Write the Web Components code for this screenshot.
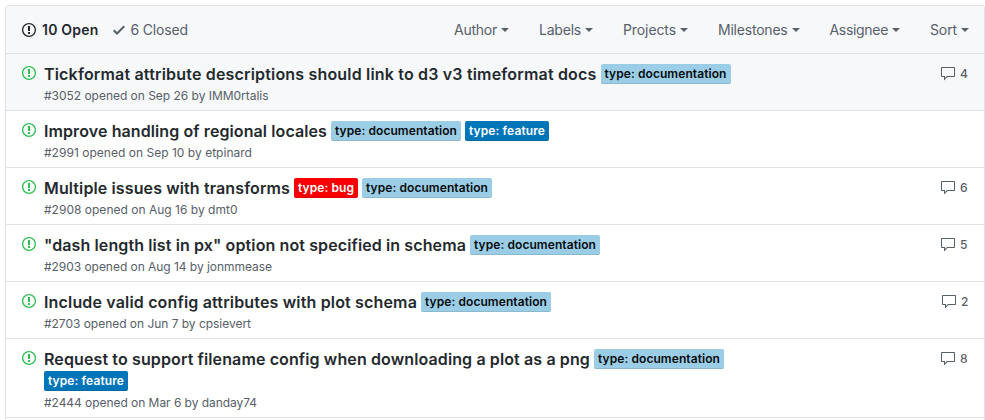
<!DOCTYPE html>
<html lang="en">
<head>
<meta charset="utf-8">
<title>Issues</title>
<style>
  body { margin: 0; padding: 5px 0 0 5px; height: 420px; box-sizing: border-box; overflow: hidden; background: #fff; color: #24292e; font: 14px/20px Inter, "Liberation Sans", sans-serif; }
</style>
</head>
<body>
<issue-list>
  <issue-toolbar slot="header"></issue-toolbar>
  <issue-row active width="552.5" number="3052" date="Sep 26" author="IMM0rtalis" meta="224.5" comments="4">Tickformat attribute descriptions should link to d3 v3 timeformat docs<issue-label slot="labels" kind="documentation"></issue-label></issue-row>
  <issue-row width="283" number="2991" date="Sep 10" author="etpinard" meta="208">Improve handling of regional locales<issue-label slot="labels" kind="documentation"></issue-label><issue-label slot="labels" kind="feature"></issue-label></issue-row>
  <issue-row width="246" number="2908" date="Aug 16" author="dmt0" meta="193.5" comments="6">Multiple issues with transforms<issue-label slot="labels" kind="bug"></issue-label><issue-label slot="labels" kind="documentation"></issue-label></issue-row>
  <issue-row width="422" number="2903" date="Aug 14" author="jonmmease" meta="228" comments="5">"dash length list in px" option not specified in schema<issue-label slot="labels" kind="documentation"></issue-label></issue-row>
  <issue-row width="373" number="2703" date="Jun 7" author="cpsievert" meta="207" comments="2">Include valid config attributes with plot schema<issue-label slot="labels" kind="documentation"></issue-label></issue-row>
  <issue-row width="546" number="2444" date="Mar 6" author="danday74" meta="213" comments="8">Request to support filename config when downloading a plot as a png<issue-label slot="labels" kind="documentation"></issue-label><issue-label slot="below" kind="feature"></issue-label></issue-row>
</issue-list>
<script>
const ICONS = {
  open: [14, 'M7 2.3c3.14 0 5.7 2.56 5.7 5.7s-2.56 5.7-5.7 5.7A5.71 5.71 0 0 1 1.3 8c0-3.14 2.56-5.7 5.7-5.7zM7 1C3.14 1 0 4.14 0 8s3.14 7 7 7 7-3.14 7-7-3.14-7-7-7zm1 3H6v5h2V4zm0 6H6v2h2v-2z'],
  check: [12, 'M12 5l-8 8-4-4 1.5-1.5L4 10l6.5-6.5L12 5z'],
  comment: [16, 'M14 1H2c-.55 0-1 .45-1 1v8c0 .55.45 1 1 1h2v3.5L7.5 11H14c.55 0 1-.45 1-1V2c0-.55-.45-1-1-1zm0 9H7l-2 2v-2H2V2h12v8z']
};
class OctIcon extends HTMLElement {
  connectedCallback() {
    const [w, d] = ICONS[this.getAttribute('name')];
    this.attachShadow({mode: 'open'}).innerHTML = `<style>:host{display:block;flex:none;width:${w}px;height:16px}svg{display:block;fill:currentColor}</style><svg width="${w}" height="16" viewBox="0 0 ${w} 16"><path fill-rule="evenodd" d="${d}"/></svg>`;
  }
}
customElements.define('oct-icon', OctIcon);

/* A single line of text tracked so that it fills the given width. */
class TextRun extends HTMLElement {
  connectedCallback() {
    const w = parseFloat(this.getAttribute('width'));
    const root = this.attachShadow({mode: 'open'});
    root.innerHTML = `<style>:host{display:block;flex:none;white-space:pre;width:${w}px}span{display:inline-block}</style><span></span>`;
    const span = root.querySelector('span');
    span.textContent = this.getAttribute('text');
    const natural = span.getBoundingClientRect().width;
    span.style.letterSpacing = (w - natural) / span.textContent.length + 'px';
  }
}
customElements.define('text-run', TextRun);

class IssueLabel extends HTMLElement {
  connectedCallback() {
    const kind = this.getAttribute('kind');
    const [bg, fg, w] = {documentation: ['#9bcee6', '#050a0c', 122], feature: ['#0075b8', '#fff', 76], bug: ['#f80000', '#fff', 56]}[kind];
    this.attachShadow({mode: 'open'}).innerHTML = `<style>:host{display:block;flex:none;box-sizing:border-box;height:20px;padding:0 4px;border-radius:2px;background:${bg};color:${fg};font-size:12px;font-weight:600;line-height:19px;box-shadow:inset 0 -1px 0 rgba(27,31,35,.12)}</style><text-run width="${w}" text="type: ${kind}"></text-run>`;
  }
}
customElements.define('issue-label', IssueLabel);

class FilterMenu extends HTMLElement {
  connectedCallback() {
    this.attachShadow({mode: 'open'}).innerHTML = `<style>:host{display:flex;align-items:center;gap:4px}i{width:0;height:0;border:4px solid transparent;border-top-color:currentColor;border-bottom:0;margin-top:1px}</style><text-run width="${this.getAttribute('width')}" text="${this.getAttribute('text')}"></text-run><i></i>`;
  }
}
customElements.define('filter-menu', FilterMenu);

class IssueToolbar extends HTMLElement {
  connectedCallback() {
    this.attachShadow({mode: 'open'}).innerHTML = `<style>
      :host{display:flex;align-items:center;height:48px;box-sizing:border-box;padding:0 15px 0 16px;background:#f6f8fa;border-bottom:1px solid #dfe2e5;color:#586069}
      .state{display:flex;align-items:center;gap:6px;margin-right:14px}
      .on{color:#24292e;font-weight:600}
      nav{display:flex;gap:30px;margin-left:auto}
    </style>
    <div class="state on"><oct-icon name="open"></oct-icon><text-run width="56.5" text="10 Open"></text-run></div>
    <div class="state"><oct-icon name="check"></oct-icon><text-run width="57.5" text="6 Closed"></text-run></div>
    <nav>${[['Author', 43], ['Labels', 42], ['Projects', 53], ['Milestones', 69.5], ['Assignee', 58.5], ['Sort', 27]].map(([t, w]) => `<filter-menu text="${t}" width="${w}"></filter-menu>`).join('')}</nav>`;
  }
}
customElements.define('issue-toolbar', IssueToolbar);

class IssueRow extends HTMLElement {
  connectedCallback() {
    const a = n => this.getAttribute(n);
    const title = [...this.childNodes].filter(n => n.nodeType === 3).map(n => n.data).join('').trim().replace(/"/g, '&quot;');
    this.attachShadow({mode: 'open'}).innerHTML = `<style>
      :host{display:flex;align-items:flex-start;padding:10px 16px 5px;border-bottom:1px solid #dfe2e5}
      :host([active]){background:#f6f8fa}
      .state{color:#2cbe4e;padding-top:1px;margin-right:8px}
      .body{flex:1}
      .line{display:flex;gap:4px;height:20px}
      .title{font-size:16px;font-weight:600;line-height:21px}
      .below{display:flex}
      .below ::slotted(*){margin-top:2px}
      .meta{font-size:12px;line-height:18px;color:#586069;margin-top:3px;height:18px}
      .comments{display:flex;gap:4px;align-items:center;color:#586069;font-size:12px;font-weight:500;line-height:18px;padding-top:1px}
    </style>
    <oct-icon class="state" name="open"></oct-icon>
    <div class="body">
      <div class="line"><text-run class="title" width="${a('width')}" text="${title}"></text-run><slot name="labels"></slot></div>
      <div class="below"><slot name="below"></slot></div>
      <div class="meta"><text-run width="${a('meta')}" text="#${a('number')} opened on ${a('date')} by ${a('author')}"></text-run></div>
    </div>
    ${a('comments') ? `<div class="comments"><oct-icon name="comment"></oct-icon><text-run width="${a('comments') === '2' ? 7 : 8}" text="${a('comments')}"></text-run></div>` : ''}`;
  }
}

class IssueList extends HTMLElement {
  connectedCallback() {
    this.attachShadow({mode: 'open'}).innerHTML = `<style>:host{display:block;box-sizing:border-box;width:980px;height:425px;border:1px solid #dfe2e5;border-radius:3px;overflow:hidden}</style><slot name="header"></slot><slot></slot>`;
  }
}
customElements.define('issue-list', IssueList);
customElements.define('issue-row', IssueRow);
</script>
</body>
</html>
